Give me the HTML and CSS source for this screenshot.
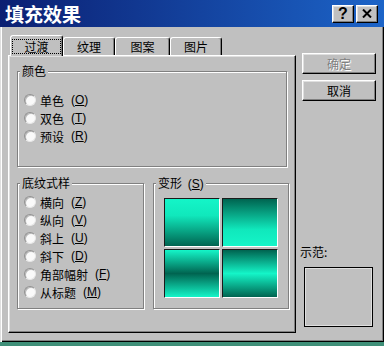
FILE: index.html
```html
<!DOCTYPE html>
<html>

<head>
	<meta charset="UTF-8">
	<title>填充效果</title>
	<link rel="stylesheet" href="styles.css">
</head>

<body>
	<div class="window">
		<div class="titlebar">
			<span class="title">填充效果</span>
			<div class="controls">
				<span class="cbtn help">?</span>
				<span class="cbtn close">
					<svg width="10" height="9" viewBox="0 0 10 9">
						<path d="M1 0.5 L9 8.5 M9 0.5 L1 8.5" stroke="#000" stroke-width="2" fill="none" />
					</svg>
				</span>
			</div>
		</div>
		<div class="client">
			<div class="sheet">
				<div class="tabs">
					<div class="tab active"><span class="focus">过渡</span></div>
					<div class="tab">纹理</div>
					<div class="tab wide">图案</div>
					<div class="tab">图片</div>
				</div>
				<div class="panel">
					<div class="group colors">
						<div class="legend">颜色</div>
						<div class="radios">
							<label class="radio"><span class="dot"></span>单色 <span class="key">(<u>O</u>)</span></label>
							<label class="radio"><span class="dot"></span>双色 <span class="key">(<u>T</u>)</span></label>
							<label class="radio"><span class="dot"></span>预设 <span class="key">(<u>R</u>)</span></label>
						</div>
					</div>
					<div class="lower">
						<div class="group shading">
							<div class="legend">底纹式样</div>
							<div class="radios">
								<label class="radio"><span class="dot"></span>横向 <span class="key">(<u>Z</u>)</span></label>
								<label class="radio"><span class="dot"></span>纵向 <span class="key">(<u>V</u>)</span></label>
								<label class="radio"><span class="dot"></span>斜上 <span class="key">(<u>U</u>)</span></label>
								<label class="radio"><span class="dot"></span>斜下 <span class="key">(<u>D</u>)</span></label>
								<label class="radio"><span class="dot"></span>角部幅射 <span class="key">(<u>F</u>)</span></label>
								<label class="radio"><span class="dot"></span>从标题 <span class="key">(<u>M</u>)</span></label>
							</div>
						</div>
						<div class="group variants">
							<div class="legend">变形 <span class="key">(<u>S</u>)</span></div>
							<div class="swatches">
								<div class="swatch s1"></div>
								<div class="swatch s2"></div>
								<div class="swatch s3"></div>
								<div class="swatch s4"></div>
							</div>
						</div>
					</div>
				</div>
			</div>
			<div class="side">
				<div class="btn disabled">确定</div>
				<div class="btn">取消</div>
				<div class="sample-label">示范:</div>
				<div class="sample"></div>
			</div>
		</div>
	</div>
</body>

</html>
```

FILE: styles.css
```css
* {
	box-sizing: border-box;
}

html,
body {
	margin: 0;
	padding: 0;
}

body {
	width: 384px;
	height: 346px;
	overflow: hidden;
	background: #3f8f78;
	font-family: "Noto Sans CJK SC", sans-serif;
	font-size: 12px;
	color: #000;
}

.window {
	width: 384px;
	height: 342px;
	background: #c0c0c0;
	display: flex;
	flex-direction: column;
}

.titlebar {
	flex: none;
	height: 27px;
	display: flex;
	align-items: center;
	justify-content: space-between;
	padding: 0 6px 0 5px;
	background: linear-gradient(to right, #0b1f72, #1c64c8);
}

.title {
	color: #fff;
	font-weight: bold;
	font-size: 19px;
	line-height: 27px;
}

.controls {
	display: flex;
	gap: 2px;
}

.cbtn {
	width: 22px;
	height: 18px;
	display: flex;
	align-items: center;
	justify-content: center;
	background: #c0c0c0;
	border: 1px solid;
	border-color: #fff #000 #000 #fff;
	box-shadow: inset -1px -1px 0 #808080, inset 1px 1px 0 #dfdfdf;
	font: bold 16px "Liberation Sans", sans-serif;
	line-height: 16px;
}

.client {
	flex: 1;
	display: flex;
	gap: 4px;
	padding: 8px 0 0 8px;
	box-shadow: inset 1px 0 0 #dfdfdf, inset 2px 0 0 #fff, inset -1px -1px 0 #000, inset -2px -2px 0 #808080;
}

.sheet {
	width: 288px;
	display: flex;
	flex-direction: column;
}

.tabs {
	display: flex;
	align-items: flex-end;
	height: 20px;
	padding-left: 2px;
}

.tab {
	width: 52px;
	height: 18px;
	display: flex;
	align-items: center;
	justify-content: center;
	border: 1px solid;
	border-bottom: none;
	border-color: #fff #000 transparent #fff;
	border-radius: 3px 3px 0 0;
	box-shadow: inset -1px 0 0 #808080;
}

.tab.wide {
	width: 55px;
}

.tab.active {
	width: 53px;
	height: 21px;
	margin-bottom: -1px;
	background: #c0c0c0;
	position: relative;
	z-index: 1;
}

.focus {
	width: 49px;
	height: 15px;
	display: flex;
	align-items: center;
	justify-content: center;
	border: 1px dotted #000;
}

.panel {
	height: 278px;
	background: #c0c0c0;
	border: 1px solid;
	border-color: #fff #000 #000 #fff;
	box-shadow: inset -1px -1px 0 #808080, inset 1px 1px 0 #dfdfdf;
	padding: 15px 0 0 8px;
}

.group {
	border: 1px solid #808080;
	box-shadow: inset 1px 1px 0 #fff, 1px 1px 0 #fff;
	padding: 0 6px;
}

.legend {
	width: fit-content;
	margin: -8px 0 0 -4px;
	padding: 0 2px;
	background: #c0c0c0;
	line-height: 14px;
}

.colors {
	width: 270px;
	height: 96px;
}

.colors .radios {
	margin-top: 13px;
}

.lower {
	display: flex;
	gap: 9px;
	margin-top: 16px;
}

.shading {
	width: 127px;
	height: 126px;
}

.shading .radios {
	margin-top: 3px;
}

.radio {
	display: flex;
	align-items: center;
	gap: 4px;
	height: 18px;
	white-space: nowrap;
}

.key {
	margin-left: 3px;
	font-family: "Liberation Sans", sans-serif;
	font-size: 12px;
}

.dot {
	flex: none;
	width: 12px;
	height: 12px;
	border-radius: 50%;
	background: #fafafa;
	border: 1px solid;
	border-color: #909090 #e8e8e8 #e8e8e8 #909090;
	box-shadow: inset 1px 1px 0 #b8b8b8;
}

.variants {
	width: 136px;
	height: 126px;
}

.swatches {
	display: grid;
	grid-template-columns: 56px 56px;
	grid-template-rows: 49px 49px;
	gap: 2px;
	margin: 7px 0 0 4px;
}

.swatch {
	border: 1px solid;
	border-color: #1a1a1a #fff #fff #1a1a1a;
}

.s1 {
	background: linear-gradient(to bottom, #14f5c8 0%, #10e8bc 35%, #006450 100%);
}

.s2 {
	background: linear-gradient(to bottom, #006450 0%, #10e8bc 65%, #14f5c8 100%);
}

.s3 {
	background: linear-gradient(to bottom, #14f5c8 0%, #006450 50%, #14f5c8 100%);
}

.s4 {
	background: linear-gradient(to bottom, #006450 0%, #14f5c8 50%, #006450 100%);
}

.side {
	width: 76px;
	display: flex;
	flex-direction: column;
	padding-top: 18px;
}

.btn {
	width: 74px;
	height: 21px;
	margin-left: 2px;
	display: flex;
	align-items: center;
	justify-content: center;
	border: 1px solid;
	border-color: #fff #000 #000 #fff;
	box-shadow: inset -1px -1px 0 #808080, inset 1px 1px 0 #dfdfdf;
}

.btn+.btn {
	margin-top: 6px;
}

.btn.disabled {
	color: #808080;
	text-shadow: 1px 1px 0 #fff;
}

.sample-label {
	margin-top: 144px;
	line-height: 14px;
}

.sample {
	width: 69px;
	height: 60px;
	margin: 8px 0 0 4px;
	border: 1px solid #000;
	box-shadow: inset 1px 1px 0 #dfdfdf, inset -1px -1px 0 #dfdfdf;
}
```
